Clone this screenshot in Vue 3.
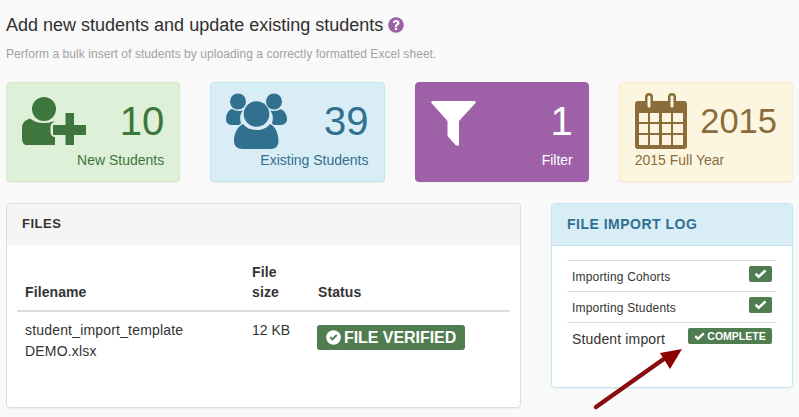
<script setup>
const files = [{ name: 'student_import_template DEMO.xlsx', size: '12 KB' }]
</script>

<template>
  <div class="page">
    <header class="head">
      <h1 class="title">
        Add new students and update existing students
        <svg class="help" viewBox="0 0 16 16" width="16" height="16">
          <circle cx="8" cy="8" r="7.800" fill="#9c60a7" />
          <path d="M4.800 6.100C4.900 4.200 6.300 3 8.200 3c1.900 0 3.300 1.100 3.300 2.900 0 1.300-.8 1.900-1.600 2.400-.7.400-.9.700-.9 1.200v.4H6.800v-.6c0-1.100.4-1.600 1.200-2.100.7-.4 1-.7 1-1.200 0-.6-.4-1-1-1-.7 0-1.100.4-1.200 1.100z" fill="#fff" />
          <rect x="6.800" y="10.800" width="2.300" height="2.200" fill="#fff" />
        </svg>
      </h1>
      <p class="sub">Perform a bulk insert of students by uploading a correctly formatted Excel sheet.</p>
    </header>

    <section class="cards">
      <div class="card green">
        <div class="card-top">
          <svg class="icon" width="64" height="48" viewBox="0 0 64 48">
            <circle cx="22" cy="12" r="12" fill="#3f763d" />
            <path d="M0 41v-10c0-5 3-8 8-9.500 4 3 8 4.500 14 4.500 3 0 6-.5 9-1.500h2c-3 1-4.500 3-4.500 5.500v5c0 3 2 5 5 5h-.5v8.500H6c-4 0-6-3-6-7.500z" fill="#3f763d" />
            <path d="M43.500 16h8.500v12h12v10h-12v10h-8.500V38H31V28h12.500z" fill="#3f763d" />
          </svg>
          <span class="num n10">10</span>
        </div>
        <div class="label">New Students</div>
      </div>

      <div class="card blue">
        <div class="card-top">
          <svg class="icon" width="61" height="57" viewBox="0 0 61 57">
            <circle cx="12" cy="8.500" r="8" fill="#31708f" />
            <circle cx="48" cy="8.500" r="8" fill="#31708f" />
            <path d="M6 16c3 2 8 2.500 11 1.500-3 3-3.500 8-2 13l-2 1.500H7c-4.500 0-7-2-7-6 0-4 2-9 6-10zM55 16c-3 2-8 2.500-11 1.500 3 3 3.500 8 2 13l2 1.500h5.500c4.500 0 7.500-2 7.500-6 0-4-2.500-9-6.500-10z" fill="#31708f" />
            <circle cx="30.500" cy="21" r="12.800" fill="#31708f" />
            <path d="M17 31c3 4 8 6 13.500 6s10.500-2 13.500-6c5 2 8.500 9 8.500 17 0 5-3 8-8 8h-28c-5 0-8.500-3-8.500-8 0-8 4-15 9-17z" fill="#31708f" />
          </svg>
          <span class="num n39">39</span>
        </div>
        <div class="label">Existing Students</div>
      </div>

      <div class="card purple">
        <div class="card-top">
          <svg class="icon" width="46" height="45" viewBox="0 0 46 45">
            <path d="M1 0h43l1 1.500L28 20v24.500h-3L16.500 35V20L0 1.500z" fill="#fff" />
          </svg>
          <span class="num n1">1</span>
        </div>
        <div class="label">Filter</div>
      </div>

      <div class="card yellow">
        <div class="card-top">
          <svg class="icon" width="52" height="56" viewBox="0 0 52 56">
            <path d="M3 8h7V4a4 4 0 0 1 8 0v4h15V4a4 4 0 0 1 8 0v4h8a3 3 0 0 1 3 3v42a3 3 0 0 1-3 3H3a3 3 0 0 1-3-3V11a3 3 0 0 1 3-3z" fill="#8a6d3b" />
            <rect x="12.500" y="2.500" width="3" height="12" rx="1.500" fill="#fcf8e3" />
            <rect x="35.500" y="2.500" width="3" height="12" rx="1.500" fill="#fcf8e3" />
            <g fill="#fcf4df">
              <rect x="4" y="20" width="9" height="9" /><rect x="15" y="20" width="9" height="9" /><rect x="27" y="20" width="9" height="9" /><rect x="38" y="20" width="10" height="9" />
              <rect x="4" y="31" width="9" height="9" /><rect x="15" y="31" width="9" height="9" /><rect x="27" y="31" width="9" height="9" /><rect x="38" y="31" width="10" height="9" />
              <rect x="4" y="42" width="9" height="10" /><rect x="15" y="42" width="9" height="10" /><rect x="27" y="42" width="9" height="10" /><rect x="38" y="42" width="10" height="10" />
            </g>
          </svg>
          <span class="num n2015">2015</span>
        </div>
        <div class="label left">2015 Full Year</div>
      </div>
    </section>

    <section class="panels">
      <div class="panel files">
        <div class="panel-head">FILES</div>
        <div class="panel-body">
          <table class="table">
            <thead>
              <tr>
                <th class="c1">Filename</th>
                <th class="c2">File size</th>
                <th class="c3">Status</th>
              </tr>
            </thead>
            <tbody>
              <tr v-for="f in files" :key="f.name">
                <td class="spaced">{{ f.name }}</td>
                <td>{{ f.size }}</td>
                <td>
                  <span class="verified">
                    <svg viewBox="0 0 16 16" width="15" height="15">
                      <circle cx="8" cy="8" r="7.800" fill="#fff" />
                      <path d="M3.800 8.300l3.100 3.100 5.300-5.300-1.500-1.500-3.800 3.800-1.600-1.600z" fill="#4f7d50" />
                    </svg>
                    FILE VERIFIED
                  </span>
                </td>
              </tr>
            </tbody>
          </table>
        </div>
      </div>

      <div class="panel log">
        <div class="panel-head">FILE IMPORT LOG</div>
        <div class="log-body">
          <div class="log-row small">
            <span>Importing Cohorts</span>
            <span class="chip"><svg viewBox="0 0 14 11" width="13" height="10"><path d="M.5 6l2-2 2.500 2.500L11.500.5l2 2L5 10.500z" fill="#fff" /></svg></span>
          </div>
          <div class="log-row small">
            <span>Importing Students</span>
            <span class="chip"><svg viewBox="0 0 14 11" width="13" height="10"><path d="M.5 6l2-2 2.500 2.500L11.500.5l2 2L5 10.500z" fill="#fff" /></svg></span>
          </div>
          <div class="log-row big">
            <span>Student import</span>
            <span class="chip wide"><svg viewBox="0 0 14 11" width="11" height="9"><path d="M.5 6l2-2 2.500 2.500L11.500.5l2 2L5 10.500z" fill="#fff" /></svg>COMPLETE</span>
          </div>
        </div>
      </div>
    </section>

    <svg class="arrow" width="100" height="70" viewBox="590 345 100 70">
      <path d="M596 407L668 356" stroke="#8b0d10" stroke-width="4.500" stroke-linecap="round" fill="none" />
      <path d="M682 349L660 353 670 369z" fill="#8b0000" />
    </svg>
  </div>
</template>

<style>
html, body { margin: 0; background: #f9f9f9; }
</style>

<style scoped>
.page {
  position: relative;
  box-sizing: border-box;
  width: 799px;
  height: 417px;
  padding: 14px 6px 0;
  overflow: hidden;
  background: #f9f9f9;
  font-family: "Liberation Sans", Arial, sans-serif;
  color: #333;
}
.head { height: 68px; }
.title {
  margin: 0;
  display: flex;
  align-items: center;
  gap: 5px;
  font-size: 18px;
  line-height: 22px;
  font-weight: 400;
  color: #2f2f2f;
}
.help { margin-top: -1px; }
.sub {
  margin: 10px 0 0;
  font-size: 12px;
  line-height: 16px;
  letter-spacing: 0.06px;
  color: #a2a2a2;
}
.cards {
  display: grid;
  grid-template-columns: repeat(4, 174.25px);
  column-gap: 30px;
}
.card {
  box-sizing: border-box;
  height: 100px;
  padding: 10px 15px 0;
  border: 1px solid;
  border-radius: 4px;
  box-shadow: 0 1px 1px rgba(0, 0, 0, 0.05);
}
.card-top {
  display: flex;
  justify-content: space-between;
  height: 60px;
}
.num { font-size: 40px; line-height: 46px; }
.n10, .n39, .n1 { margin-top: 5px; }
.n2015 { font-size: 34.500px; margin-top: 5px; }
.label { font-size: 14px; line-height: 16px; text-align: right; margin-top: -1px; }
.label.left { text-align: left; }
.green { background: #dff0d8; border-color: #d6e9c6; color: #3c763d; }
.blue { background: #d9edf7; border-color: #bce8f1; color: #31708f; }
.purple { background: #9e60a6; border-color: #9e60a6; color: #fff; }
.yellow { background: #fcf6e1; border-color: #faebcc; color: #8a6d3b; }
.green .icon { margin-top: 4px; }
.blue .icon { margin-top: 0; }
.purple .icon { margin-top: 8px; }
.yellow .icon { margin-top: 0; }
.panels {
  display: flex;
  justify-content: space-between;
  align-items: flex-start;
  margin-top: 21px;
}
.panel {
  box-sizing: border-box;
  background: #fff;
  border: 1px solid #ddd;
  border-radius: 4px;
  box-shadow: 0 1px 1px rgba(0, 0, 0, 0.05);
}
.files { width: 515px; height: 205px; }
.log { width: 242px; height: 185px; border-color: #bce8f1; }
.panel-head {
  height: 41px;
  padding-left: 15px;
  font-size: 13px;
  font-weight: 700;
  line-height: 40px;
  letter-spacing: 0.5px;
  background: #f5f5f5;
  color: #333;
  border-radius: 3px 3px 0 0;
}
.log .panel-head {
  background: #d9edf7;
  border-bottom: 1px solid #bce8f1;
  color: #31708f;
  font-size: 14px;
}
.panel-body { padding: 17px 10px 15px; }
.table { width: 100%; border-collapse: collapse; font-size: 14px; color: #333; }
.table th {
  text-align: left;
  vertical-align: bottom;
  padding: 0 8px 8px;
  font-size: 14px;
  line-height: 20px;
  letter-spacing: 0.1px;
  border-bottom: 2px solid #ddd;
}
.table td {
  vertical-align: top;
  padding: 8px 8px 8px;
  line-height: 21px;
}
.table td.spaced { letter-spacing: 0.18px; }
.c1 { width: 211px; }
.c2 { width: 50px; }
.verified {
  display: inline-flex;
  align-items: center;
  gap: 3px;
  box-sizing: border-box;
  width: 148px;
  height: 25px;
  margin: 5px 0 0 -1px;
  padding-left: 9px;
  border-radius: 3px;
  background: #4f7d50;
  color: #fff;
  font-size: 16px;
  font-weight: 700;
  letter-spacing: -0.05px;
  white-space: nowrap;
}
.log-body { padding: 14px 15px 0; }
.log-row {
  display: flex;
  justify-content: space-between;
  box-sizing: border-box;
  height: 31px;
  padding: 5px 5px 0;
  border-top: 1px solid #ddd;
}
.small span:first-child { font-size: 12px; line-height: 20px; margin-top: 1px; letter-spacing: 0.18px; }
.big span:first-child { font-size: 14px; line-height: 20px; margin-top: 1px; letter-spacing: 0.15px; }
.chip {
  display: inline-flex;
  align-items: center;
  justify-content: center;
  box-sizing: border-box;
  width: 23px;
  height: 16px;
  border-radius: 2px;
  background: #4f7d50;
  color: #fff;
}
.chip.wide {
  width: 84px;
  gap: 2px;
  font-size: 10.500px;
  font-weight: 700;
}
.arrow {
  position: absolute;
  left: 590px;
  top: 345px;
  pointer-events: none;
}
</style>
